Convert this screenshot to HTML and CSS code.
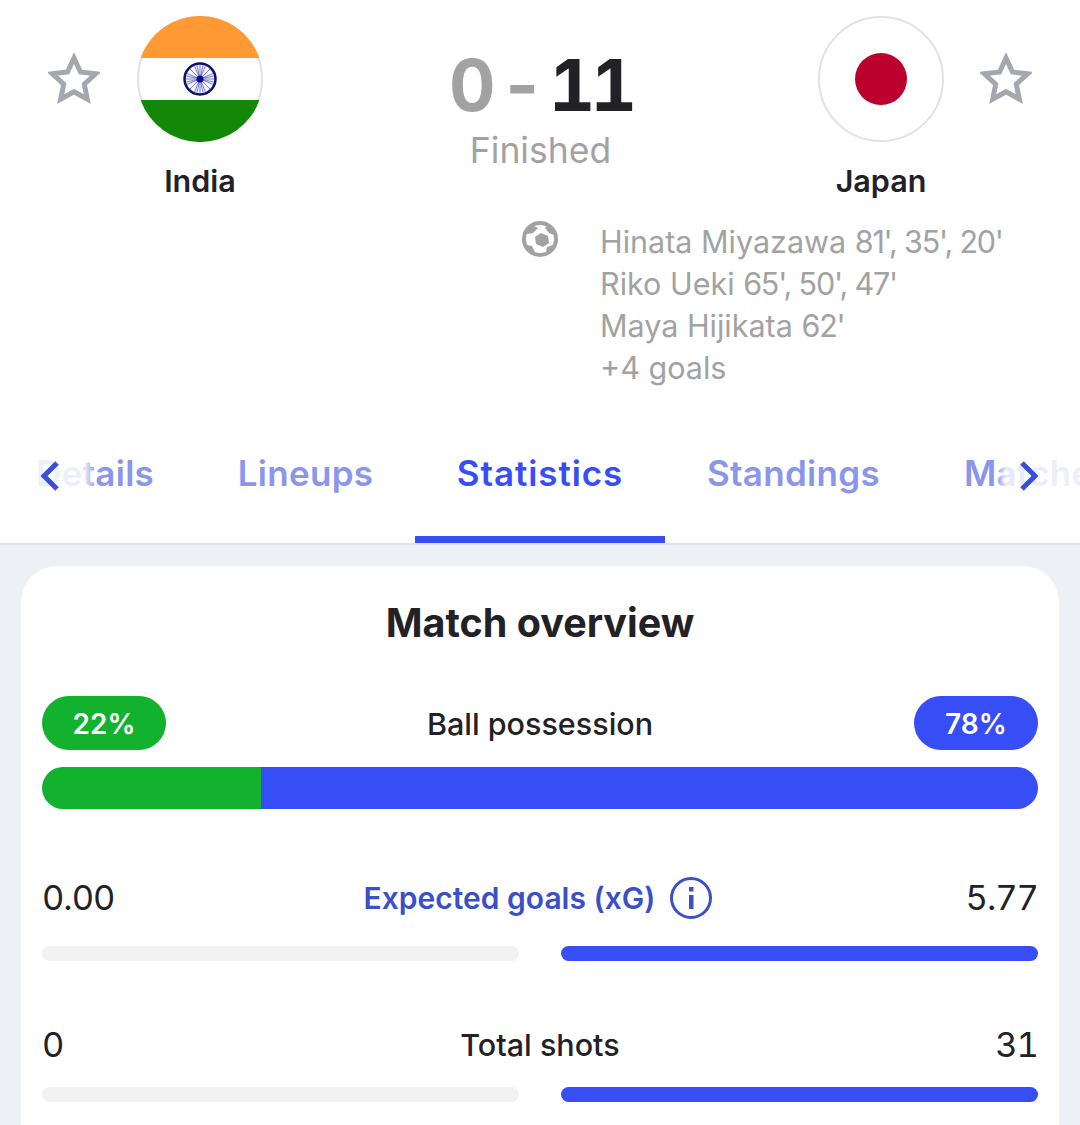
FILE: index.html
```html
<!DOCTYPE html>
<html lang="en">
<head>
    <meta charset="UTF-8">
    <meta name="viewport" content="width=device-width, initial-scale=1.0">
    <title>India - Japan</title>
    <link rel="stylesheet" href="styles.css">
</head>
<body>
    <header class="match-header">
        <div class="match-top">
            <div class="side side-home">
                <svg class="star" viewBox="0 0 52 52"><path d="M26 5l6.4 14 15.2 1.8-11.3 10.4 3 15L26 38.7 12.700 46.200l3-15L4.400 20.800 19.600 19z"/></svg>
                <div class="team">
                    <svg class="flag" viewBox="0 0 126 126">
                        <circle cx="63" cy="63" r="62" fill="#fff" stroke="#e2e2e4" stroke-width="2"/>
                        <path d="M3.600 42a63 63 0 0 1 118.800 0z" fill="#ff9933"/>
                        <path d="M3.600 84a63 63 0 0 0 118.800 0z" fill="#138808"/>
                        <circle cx="63" cy="63" r="15.500" fill="#f4f5fc" stroke="#0d0d6e" stroke-width="2.500"/>
                        <g stroke="#5a5fc4" stroke-width="0.800">
                            <path d="M63 49v28M49 63h28M53 53l20 20M53 73l20-20M57.600 50l10.800 26M50 57.600l26 10.800M50 68.400l26-10.800M57.600 76l10.800-26M60 49.300l6 27.400M49.300 60l27.400 6M49.300 66l27.400-6M60 76.700l6-27.400"/>
                        </g>
                        <circle cx="63" cy="63" r="3.500" fill="#0d0d8e"/>
                    </svg>
                    <div class="team-name">India</div>
                </div>
            </div>
            <div class="score-box">
                <div class="score"><span class="score-lost">0 - </span>11</div>
                <div class="status">Finished</div>
            </div>
            <div class="side side-away">
                <div class="team">
                    <svg class="flag" viewBox="0 0 126 126">
                        <circle cx="63" cy="63" r="62" fill="#fff" stroke="#e2e2e4" stroke-width="2"/>
                        <circle cx="63" cy="63" r="26" fill="#bc002d"/>
                    </svg>
                    <div class="team-name">Japan</div>
                </div>
                <svg class="star" viewBox="0 0 52 52"><path d="M26 5l6.4 14 15.2 1.8-11.3 10.4 3 15L26 38.7 12.700 46.200l3-15L4.400 20.800 19.600 19z"/></svg>
            </div>
        </div>
        <div class="goals">
            <svg class="ball" viewBox="0 0 36 36">
                <circle cx="18" cy="18" r="16" fill="none" stroke="#a2a2a2" stroke-width="4"/>
                <path d="M19 12l7 3 1 7-6 4-7-3-1-7z" fill="#a2a2a2"/>
                <path d="M10 4l6 3-5 5-6 1 1-6zM26 4l5 4 1 6-5-2-4-5zM5 24l5 1 3 6-5-1zM31 24l-2 6-5 2 1-6z" fill="#a2a2a2"/>
            </svg>
            <ul class="scorers">
                <li>Hinata Miyazawa <span class="minutes">81', 35', 20'</span></li>
                <li>Riko Ueki <span class="minutes">65', 50', 47'</span></li>
                <li>Maya Hijikata <span class="minutes">62'</span></li>
                <li>+4 goals</li>
            </ul>
        </div>
        <nav class="tabs">
            <div class="tab-track">
                <a class="tab">Details</a>
                <a class="tab">Lineups</a>
                <a class="tab active">Statistics</a>
                <a class="tab">Standings</a>
                <a class="tab">Matches</a>
            </div>
            <div class="tab-fade tab-fade-left">
                <svg class="chevron" viewBox="0 0 20 32"><path d="M17 3L4 16l13 13"/></svg>
            </div>
            <div class="tab-fade tab-fade-right">
                <svg class="chevron" viewBox="0 0 20 32"><path d="M3 3l13 13L3 29"/></svg>
            </div>
        </nav>
    </header>

    <main class="content">
        <section class="card">
            <h2>Match overview</h2>
            <div class="possession-head">
                <span class="pill pill-home">22%</span>
                <span class="stat-title stat-title-possession">Ball possession</span>
                <span class="pill pill-away">78%</span>
            </div>
            <div class="possession-bar">
                <div class="possession-home" style="width: 22%"></div>
                <div class="possession-away"></div>
            </div>

            <div class="stat">
                <div class="stat-head">
                    <span class="stat-value">0.00</span>
                    <span class="stat-title stat-link">Expected goals (xG)
                        <svg class="info" viewBox="0 0 42 42">
                            <circle cx="21" cy="21" r="19.500" fill="none" stroke="#3a4fc8" stroke-width="3"/>
                            <rect x="19" y="18" width="4.500" height="14" fill="#3a4fc8"/>
                            <rect x="19" y="10" width="4.500" height="4.500" fill="#3a4fc8"/>
                        </svg>
                    </span>
                    <span class="stat-value stat-value-away">5.77</span>
                </div>
                <div class="stat-bars">
                    <div class="track"></div>
                    <div class="track"><div class="fill" style="width: 100%"></div></div>
                </div>
            </div>

            <div class="stat">
                <div class="stat-head">
                    <span class="stat-value">0</span>
                    <span class="stat-title">Total shots</span>
                    <span class="stat-value stat-value-away">31</span>
                </div>
                <div class="stat-bars">
                    <div class="track"></div>
                    <div class="track"><div class="fill" style="width: 100%"></div></div>
                </div>
            </div>
        </section>
    </main>
</body>
</html>
```

FILE: styles.css
```css
* {
    box-sizing: border-box;
}
html, body {
    margin: 0;
    height: 1125px;
    overflow: hidden;
}
body {
    font-family: Inter, "Liberation Sans", sans-serif;
    background-color: #edf1f6;
    color: #222226;
}
.match-header {
    background: white;
    padding-top: 16px;
    border-bottom: 2px solid #e0e2e6;
}
.match-top {
    display: flex;
    justify-content: space-between;
    align-items: flex-start;
    padding: 0 48px;
}
.side {
    display: flex;
    align-items: flex-start;
}
.side-home {
    gap: 37px;
}
.side-away {
    gap: 36px;
}
.star {
    width: 52px;
    height: 52px;
    margin-top: 37px;
    fill: none;
    stroke: #a4a7ae;
    stroke-width: 5;
}
.team {
    width: 126px;
    display: flex;
    flex-direction: column;
    align-items: center;
}
.flag {
    width: 126px;
    height: 126px;
}
.team-name {
    margin-top: 19px;
    font-size: 30.5px;
    line-height: 40px;
    font-weight: 600;
}
.score-box {
    text-align: center;
    padding-top: 25px;
}
.score {
    font-size: 72px;
    line-height: 88px;
    font-weight: 700;
    font-feature-settings: "tnum";
    letter-spacing: -5px;
    word-spacing: -6px;
}
.score-lost {
    color: #a2a2a2;
}
.status {
    font-size: 35.5px;
    line-height: 44px;
    color: #a2a2a2;
}
.goals {
    display: flex;
    align-items: flex-start;
    gap: 42px;
    padding-left: 522px;
    margin-top: 20px;
}
.ball {
    width: 36px;
    height: 36px;
}
.scorers {
    list-style: none;
    margin: 0;
    padding: 0;
    font-size: 30.5px;
    line-height: 42px;
    color: #a2a2a2;
}
.minutes {
    letter-spacing: -1.2px;
}
.tabs {
    position: relative;
    overflow: hidden;
    margin-top: 33px;
}
.tab-track {
    display: grid;
    grid-template-columns: 202px 219px 250px 257px 232px;
    margin-left: -6px;
    width: 1200px;
}
.tab {
    padding: 31px 0 43px;
    font-size: 35px;
    line-height: 40px;
    font-weight: 600;
    letter-spacing: 0.3px;
    text-align: center;
    color: #8a96ec;
    border-bottom: 7px solid transparent;
}
.tab.active {
    color: #374df5;
    letter-spacing: 0.9px;
    border-bottom-color: #374df5;
}
.tab-fade {
    position: absolute;
    top: 0;
    bottom: 7px;
    display: flex;
    align-items: center;
    padding-bottom: 6px;
}
.tab-fade-left {
    left: 0;
    width: 96px;
    padding-left: 40px;
    background: linear-gradient(to right, rgba(255,255,255,0.85) 80%, rgba(255,255,255,0.7) 90%, rgba(255,255,255,0));
}
.tab-fade-right {
    right: 0;
    width: 84px;
    padding-left: 23px;
    background: linear-gradient(to right, rgba(255,255,255,0), rgba(255,255,255,0.8) 12%, rgba(255,255,255,0.85));
}
.chevron {
    width: 20px;
    height: 32px;
    fill: none;
    stroke: #3a4fd8;
    stroke-width: 5;
}
.content {
    padding: 21px 21px 0;
}
.card {
    background: white;
    border-radius: 36px;
    padding: 32px 21px 80px;
}
h2 {
    margin: 0 0 48px;
    font-size: 39.5px;
    line-height: 50px;
    font-weight: 700;
    text-align: center;
}
.possession-head,
.stat-head {
    display: grid;
    grid-template-columns: 1fr auto 1fr;
    align-items: center;
}
.pill {
    width: 124px;
    height: 54px;
    border-radius: 27px;
    color: white;
    font-size: 28px;
    font-weight: 600;
    line-height: 56px;
    text-align: center;
}
.pill-home {
    background-color: #12b22f;
}
.pill-away {
    background-color: #374df5;
    justify-self: end;
}
.stat-title {
    font-size: 30.5px;
    font-weight: 500;
    line-height: 42px;
}
.stat-title-possession {
    padding-top: 2px;
}
.possession-bar {
    display: flex;
    height: 42px;
    margin-top: 17px;
    border-radius: 21px;
    overflow: hidden;
}
.possession-home {
    background-color: #12b22f;
}
.possession-away {
    flex: 1;
    background-color: #374df5;
}
.stat {
    margin-top: 62px;
}
.stat + .stat {
    margin-top: 63px;
}
.stat-head {
    min-height: 42px;
}
.stat-value {
    font-size: 34.5px;
    line-height: 42px;
    font-feature-settings: "tnum";
    letter-spacing: -1px;
}
.stat-value-away {
    justify-self: end;
}
.stat-link {
    display: flex;
    align-items: center;
    gap: 15px;
    padding: 6px 4px 6px 0;
    font-size: 30px;
    color: #3a4fc8;
    font-weight: 600;
}
.info {
    width: 42px;
    height: 42px;
}
.stat-bars {
    display: grid;
    grid-template-columns: 1fr 1fr;
    gap: 42px;
    margin-top: 21px;
}
.track {
    height: 15px;
    border-radius: 8px;
    background-color: #f2f2f3;
    overflow: hidden;
}
.fill {
    height: 100%;
    background-color: #374df5;
}
```
